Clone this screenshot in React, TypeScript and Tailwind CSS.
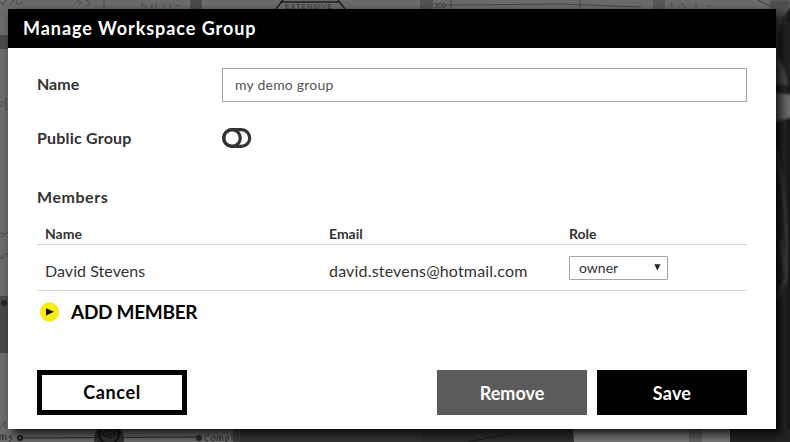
import React from "react";

function Backdrop() {
  return (
    <svg className="absolute inset-0" width="790" height="442" viewBox="0 0 790 442" fill="none">
      <defs>
        <linearGradient id="jacket" x1="0" x2="1" y1="0" y2="0">
          <stop offset="0" stopColor="#1b1b1b" />
          <stop offset="0.6" stopColor="#2c2c2c" />
          <stop offset="1" stopColor="#141414" />
        </linearGradient>
        <filter id="soft" x="-20%" y="-5%" width="140%" height="110%">
          <feGaussianBlur stdDeviation="1.2" />
        </filter>
      </defs>
      <rect width="790" height="442" fill="#6b6b6b" />
      <rect x="190" width="12" height="10" fill="#4c4c4c" />
      <rect x="420" width="13" height="10" fill="#525252" />
      <rect x="653" width="12" height="10" fill="#565656" />
      <rect y="35" width="8" height="14" fill="#4a4a4a" />
      <rect y="296" width="8" height="57" fill="#484848" />
      <circle cx="4" cy="303" r="3" fill="#262626" />
      <g stroke="#3d3d3d" strokeWidth="1">
        <path d="M0 2l3 3l3-5M10 5l4-5M17 0c-3 5 4 6 6 1M75 3c4-4 7-2 4 2M86 0c5 1 5 5 0 6M104 0v9" opacity=".7" />
        <path d="M142 3v6M142 6c4-3 5 0 3 3M150 7c3-4 5 0 1 1M156 3v6M162 5c4-1 4 3 0 4M170 3v6M175 6h6" opacity=".6" />
        <path d="M283 0l-7 9M338 0l7 9M280 2h60" stroke="#202020" strokeWidth="1.5" />
        <path d="M451 0v9M445 5h6l110-1l80 3M580 0v9" stroke="#484848" />
        <path d="M668 8l4-5v6M678 8l4-5l3 5M696 3v6M707 6h4" opacity=".6" />
        <path d="M758 0l18 9" />
        <path d="M0 103c5-5 6 3 0 3M6 98v13M0 234c5-3 5 2 1 3M3 236l5-4M0 258h3v-4M5 254h3M0 428l5-6v6" opacity=".7" />
      </g>
      <g fill="#303030" fontSize="7" fontFamily="Liberation Sans, sans-serif">
        <text x="285" y="9" textLength="47">EXTENSIVE</text>
        <text x="434" y="8">300</text>
      </g>
      <rect x="776" y="8" width="14" height="434" fill="url(#jacket)" />
      <g filter="url(#soft)">
        <path d="M770 0h20v9l-8 8l-4 18l10 50h-18z" fill="#505050" />
        <path d="M770 92l24 3v22l-24 6z" fill="#707070" />
        <path d="M777 42c2 8-1 15 6 24c5 12 5 25 7 30h6V18c-10 3-16 12-19 24z" fill="#202020" />
        <path d="M776 150c8 40 12 70 10 125l-8 24M781 240c2 28 7 31 4 45" stroke="#3e3e3e" strokeWidth="3" />
      </g>
      <rect x="233" y="429" width="7" height="13" fill="#454545" />
      <rect x="240" y="429" width="184" height="13" fill="#353535" />
      <path d="M424 429h149l1 13H422z" fill="#303030" />
      <rect x="574" y="429" width="115" height="13" fill="#787878" />
      <rect x="689" y="429" width="13" height="13" fill="#626262" />
      <rect x="702" y="429" width="28" height="13" fill="#777" />
      <rect x="730" y="429" width="60" height="13" fill="#242424" />
      <path d="M468 442l45-9" stroke="#1c1c1c" />
      <path d="M21 438l178-1" stroke="#292929" />
      <circle cx="20" cy="438" r="2" stroke="#202020" strokeWidth="2" />
      <circle cx="199" cy="438" r="3" fill="#282828" />
      <circle cx="109" cy="439" r="15" fill="#303030" />
      <circle cx="109" cy="434" r="10" stroke="#161616" strokeWidth="2" />
      <path d="M103 434c4-5 9-4 12 0c-3 5-8 5-12 0M106 435h6" stroke="#111" />
      <g stroke="#2c2c2c" strokeWidth="1">
        <path d="M0 440v-4c2-3 3 0 3 4v-4c2-3 3 0 3 4M12 435c-4 1-3 3-1 3s1 3-2 3" />
        <path d="M209 435c-5 0-6 6-1 6M212 438c-2 3 3 4 3 0s-3-1-3 0M217 441v-4c2-2 3 0 3 4v-4c2-2 3 0 3 4M226 442v-5c4-1 3 4 0 4M232 434v7M235 437v4M238 433v8" />
      </g>
    </svg>
  );
}

const columns = "grid grid-cols-[284px_240px_1fr] px-2";

export default function App() {
  return (
    <div className="relative h-[442px] w-[790px] overflow-hidden bg-[#6b6b6b] pl-2 pt-[9px] font-['Lato',sans-serif] text-[#333]">
      <Backdrop />
      <section className="relative flex h-[420px] w-[768px] flex-col bg-white shadow-[5px_5px_10px_rgba(0,0,0,0.85)]">
        <header className="flex h-[39px] shrink-0 items-center bg-black px-[15px] pb-[2px] text-lg font-bold tracking-[0.94px] text-white">
          <span>Manage Workspace Group</span>
        </header>
        <div className="flex flex-col px-[29px] pt-5">
          <div className="flex h-[34px] items-center">
            <label className="w-[185px] pb-[2px] text-base font-bold">Name</label>
            <div className="flex h-[34px] flex-1 items-center border border-[#a5a5a5] px-3 text-sm tracking-[0.22px] text-[#555]">
              <span>my demo group</span>
            </div>
          </div>
          <div className="mt-5 flex h-[34px] items-center">
            <span className="w-[185px] pb-[2px] text-base font-bold tracking-[0.2px]">Public Group</span>
            <svg className="mb-[2px]" width="30" height="20" viewBox="0 0 30 20" fill="none" stroke="#333" strokeWidth="3.2">
              <rect x="1.7" y="1.7" width="26" height="16.6" rx="8.3" />
              <ellipse cx="10" cy="10" rx="8.3" ry="8.3" />
            </svg>
          </div>
          <h2 className="mt-[29px] h-6 text-base font-bold leading-6 tracking-[0.55px]">Members</h2>
          <div className={columns + " mt-4 h-5 border-b border-[#d5d5d5] text-sm font-bold leading-[18px]"}>
            <span>Name</span>
            <span>Email</span>
            <span>Role</span>
          </div>
          <div className={columns + " h-[46px] border-b border-[#d5d5d5] text-base"}>
            <span className="pt-[14px] tracking-[0.05px]">David Stevens</span>
            <span className="pt-[14px] tracking-[0.18px]">david.stevens@hotmail.com</span>
            <div className="mt-[11px] flex h-6 w-[99px] items-center justify-between rounded-[1px] border border-[#a5a5a5] pl-[9px] pr-[6px] text-sm">
              <span>owner</span>
              <svg className="mb-px" width="7" height="7" viewBox="0 0 7 7" fill="#222"><path d="M0.3 0.3h6.2L3.4 6.6z" /></svg>
            </div>
          </div>
          <div className="mt-[7px] flex h-7 items-center pl-[2px] text-[19px] font-bold tracking-[-0.3px] text-black">
            <svg className="mb-px mr-3" width="20" height="20" viewBox="0 0 20 20">
              <circle cx="10.5" cy="10" r="9.7" fill="#f9ec16" />
              <path d="M7 6.2L15 9.8L7 13.4z" fill="#111" />
            </svg>
            <span>ADD MEMBER</span>
          </div>
          <div className="mt-[44px] flex h-[45px] text-lg font-bold text-white">
            <button className="w-[150px] border-[5px] border-black bg-white pb-[2px] tracking-[0.65px] text-black">Cancel</button>
            <button className="ml-auto w-[150px] bg-[#5b5b5b] pt-px">Remove</button>
            <button className="ml-[10px] w-[150px] bg-black pt-px tracking-[0.2px]">Save</button>
          </div>
        </div>
      </section>
    </div>
  );
}
